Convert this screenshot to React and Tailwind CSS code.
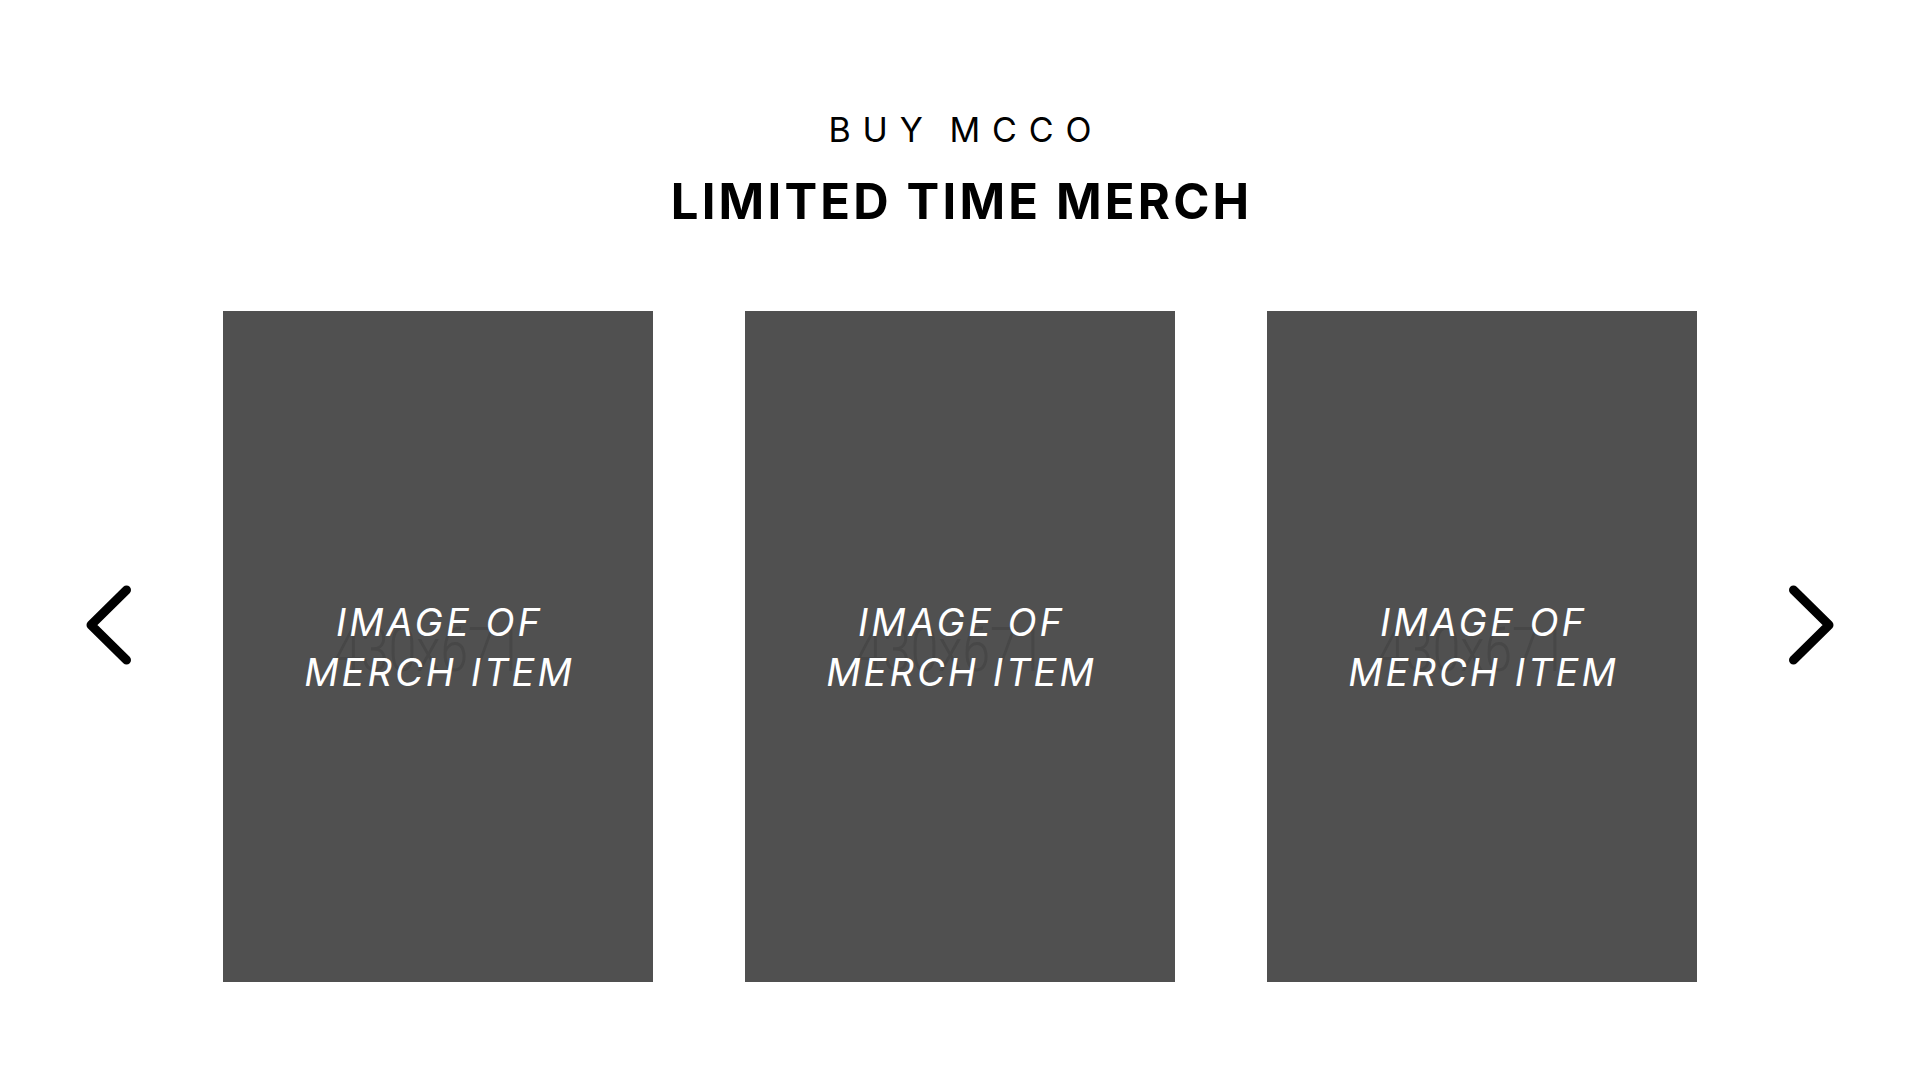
import React from 'react'

const items = [1, 2, 3]

function Chevron({ dir }) {
  const d = dir === 'left' ? 'M40.5 5 L5 40 L40.5 75' : 'M4.5 5 L40 40 L4.5 75'
  return (
    <svg viewBox="0 0 45 80" className="w-[45px] h-[80px]" fill="none">
      <path d={d} stroke="#000" strokeWidth="9" strokeLinecap="round" strokeLinejoin="round" />
    </svg>
  )
}

function MerchCard() {
  return (
    <div className="relative w-[430px] h-[671px] bg-[#505050] flex items-center justify-center">
      {/* placeholder size label */}
      <span className="absolute inset-0 flex items-center justify-center pt-[6px] pr-[24px] text-[62px] font-light text-[#474747] font-['Roboto',sans-serif] scale-x-[0.8]">
        430x671
      </span>
      <p className="relative text-center text-white italic text-[38px] leading-[50px] font-['Inter',sans-serif] tracking-[0.08em] pl-[0.08em]">
        IMAGE OF
        <br />
        MERCH ITEM
      </p>
    </div>
  )
}

export default function App() {
  return (
    <div className="w-full min-h-[1078px] bg-white font-['Inter',sans-serif] text-black">
      <div className="pt-[110px] text-center">
        <p className="text-[34px] leading-[40px] tracking-[0.35em] pl-[0.35em] [word-spacing:-0.2em] font-normal">BUY MCCO</p>
        <h1 className="mt-[24px] text-[49px] leading-[56px] font-bold tracking-[0.065em] pl-[0.065em]">LIMITED TIME MERCH</h1>
      </div>
      <div className="mt-[81px] flex justify-center gap-[92px]">
        <button className="self-start mt-[274px]" aria-label="Previous">
          <Chevron dir="left" />
        </button>
        {items.map((i) => (
          <MerchCard key={i} />
        ))}
        <button className="self-start mt-[274px]" aria-label="Next">
          <Chevron dir="right" />
        </button>
      </div>
    </div>
  )
}
